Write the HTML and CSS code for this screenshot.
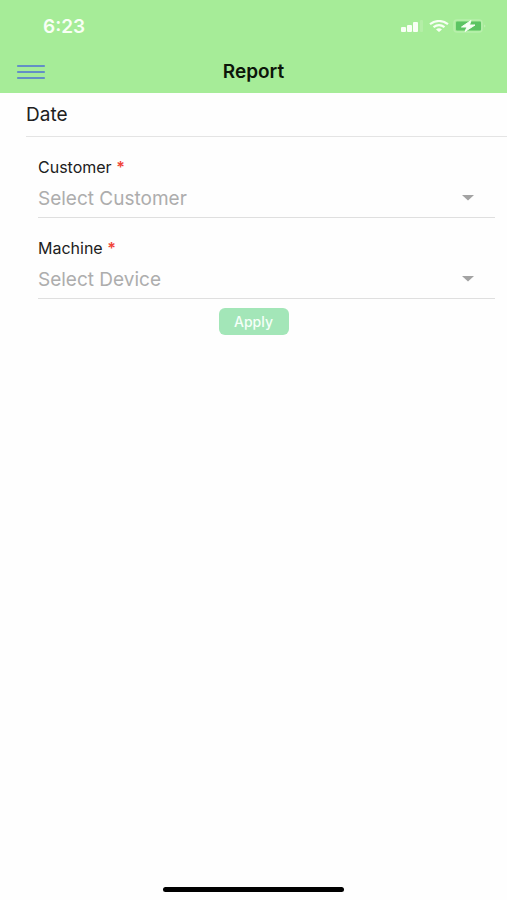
FILE: index.html
```html
<!DOCTYPE html>
<html lang="en">
<head>
<meta charset="utf-8">
<meta name="viewport" content="width=device-width, initial-scale=1">
<title>Report</title>
<link rel="stylesheet" href="styles.css">
</head>
<body>
<header class="header">
  <div class="status">
    <span class="time">6:23</span>
    <div class="indicators">
      <svg width="24" height="12" viewBox="0 0 24 12" aria-hidden="true">
        <g fill="#f8fff5"><rect x="0" y="7" width="5" height="5" rx="1"/><rect x="6" y="5" width="5" height="7" rx="1"/><rect x="12" y="2" width="5" height="10" rx="1"/></g>
        <rect x="19" y="0" width="3" height="12" rx="1" fill="#b4eea7"/>
      </svg>
      <svg width="20" height="12" viewBox="0 0 20 12" aria-hidden="true">
        <g fill="none" stroke="#f8fff5" stroke-width="2.200"><path d="M1 4.200Q10-2.200 19 4.200"/><path d="M4.500 7.200Q10 3 15.500 7.200"/></g>
        <path d="M7 9.500Q10 7 13 9.500L10 12Z" fill="#f8fff5"/>
      </svg>
      <svg width="34" height="14" viewBox="0 0 34 14" aria-hidden="true">
        <rect x="1" y="1" width="28" height="12" rx="3" fill="none" stroke="#b8efac" stroke-width="1.500"/>
        <rect x="3" y="2.500" width="25" height="9" rx="1" fill="#5cc463"/>
        <path d="M31 5.500Q34 7 31 8.500Z" fill="#bdf0b2"/>
        <path d="M18 1.500L8.500 8H14L12 12.500L22 6H16.500Z" fill="#f8fff5" stroke="#f8fff5"/>
      </svg>
    </div>
  </div>
  <nav class="nav">
    <button class="menu" type="button" aria-label="Menu">
      <svg width="30" height="16" viewBox="0 0 30 16" aria-hidden="true"><path d="M2 2H28M2 8H28M2 14H28" stroke="#638fc6" stroke-width="2.200" stroke-linecap="round"/></svg>
    </button>
    <h1 class="title">Report</h1>
  </nav>
</header>
<main class="main">
  <h2 class="date">Date</h2>
  <form class="form">
    <div class="field">
      <label class="label" for="customer">Customer <span class="required">*</span></label>
      <div class="picker">
        <select class="select" id="customer" required><option value="">Select Customer</option></select>
        <svg class="arrow" width="12" height="6" viewBox="0 0 12 6" aria-hidden="true"><path d="M0 0H12L6 5.500Z" fill="#a3a3a3"/></svg>
      </div>
    </div>
    <div class="field">
      <label class="label" for="machine">Machine <span class="required">*</span></label>
      <div class="picker">
        <select class="select" id="machine" required><option value="">Select Device</option></select>
        <svg class="arrow" width="12" height="6" viewBox="0 0 12 6" aria-hidden="true"><path d="M0 0H12L6 5.500Z" fill="#a3a3a3"/></svg>
      </div>
    </div>
    <button class="apply" type="button">Apply</button>
  </form>
</main>
<footer class="footer"><div class="home"></div></footer>
</body>
</html>
```
FILE: styles.css
```css
* { box-sizing: border-box; }
body {
  margin: 0;
  min-height: 100vh;
  display: flex;
  flex-direction: column;
  background: #fefefe;
  color: #202020;
  font-family: Inter, "Liberation Sans", sans-serif;
}
button { padding: 0; border: 0; font-family: inherit; }
svg { display: block; }
.header { padding-bottom: 2px; background: #a6ec98; }
.status {
  height: 52px;
  padding: 0 20px 0 43px;
  display: flex;
  align-items: center;
  justify-content: space-between;
}
.time { color: #f8fff5; font-size: 19px; font-weight: 600; }
.indicators { display: flex; align-items: center; gap: 4px; }
.nav {
  height: 39px;
  padding: 0 16px;
  display: grid;
  grid-template-columns: 30px 1fr 30px;
  align-items: center;
}
.menu { background: none; }
.title {
  margin: 0;
  color: #0c160a;
  font-size: 19px;
  font-weight: 600;
  line-height: 24px;
  text-align: center;
}
.main { flex: 1; }
.date {
  margin: 0 0 0 26px;
  height: 44px;
  border-bottom: 1px solid #e4e4e4;
  font-size: 19px;
  font-weight: 400;
  line-height: 44px;
}
.form {
  display: flex;
  flex-direction: column;
}
.field {
  height: 81px;
  margin: 0 12px 0 38px;
  padding-top: 20px;
  display: flex;
  flex-direction: column;
  border-bottom: 1px solid #dfdfdf;
}
.label { font-size: 16px; line-height: 20px; }
.required { color: #f04438; font-weight: 600; }
.picker { flex: 1; padding-top: 2px; display: grid; align-items: center; }
.select, .arrow { grid-area: 1 / 1; }
.select {
  width: 100%;
  height: 32px;
  margin: 0;
  padding: 0;
  border: 0;
  appearance: none;
  background: transparent;
  color: #adadad;
  font-family: inherit;
  font-size: 19px;
}
.arrow { justify-self: end; margin-right: 21px; pointer-events: none; }
.apply {
  width: 70px;
  height: 27px;
  margin-top: 9px;
  align-self: center;
  border-radius: 6px;
  background: #a3e6b8;
  color: #f5fff8;
  font-size: 14px;
  font-weight: 500;
}
.footer { padding: 16px 0 8px; }
.home {
  width: 181px;
  height: 5px;
  margin: 0 auto;
  border-radius: 3px;
  background: #000;
}
```
